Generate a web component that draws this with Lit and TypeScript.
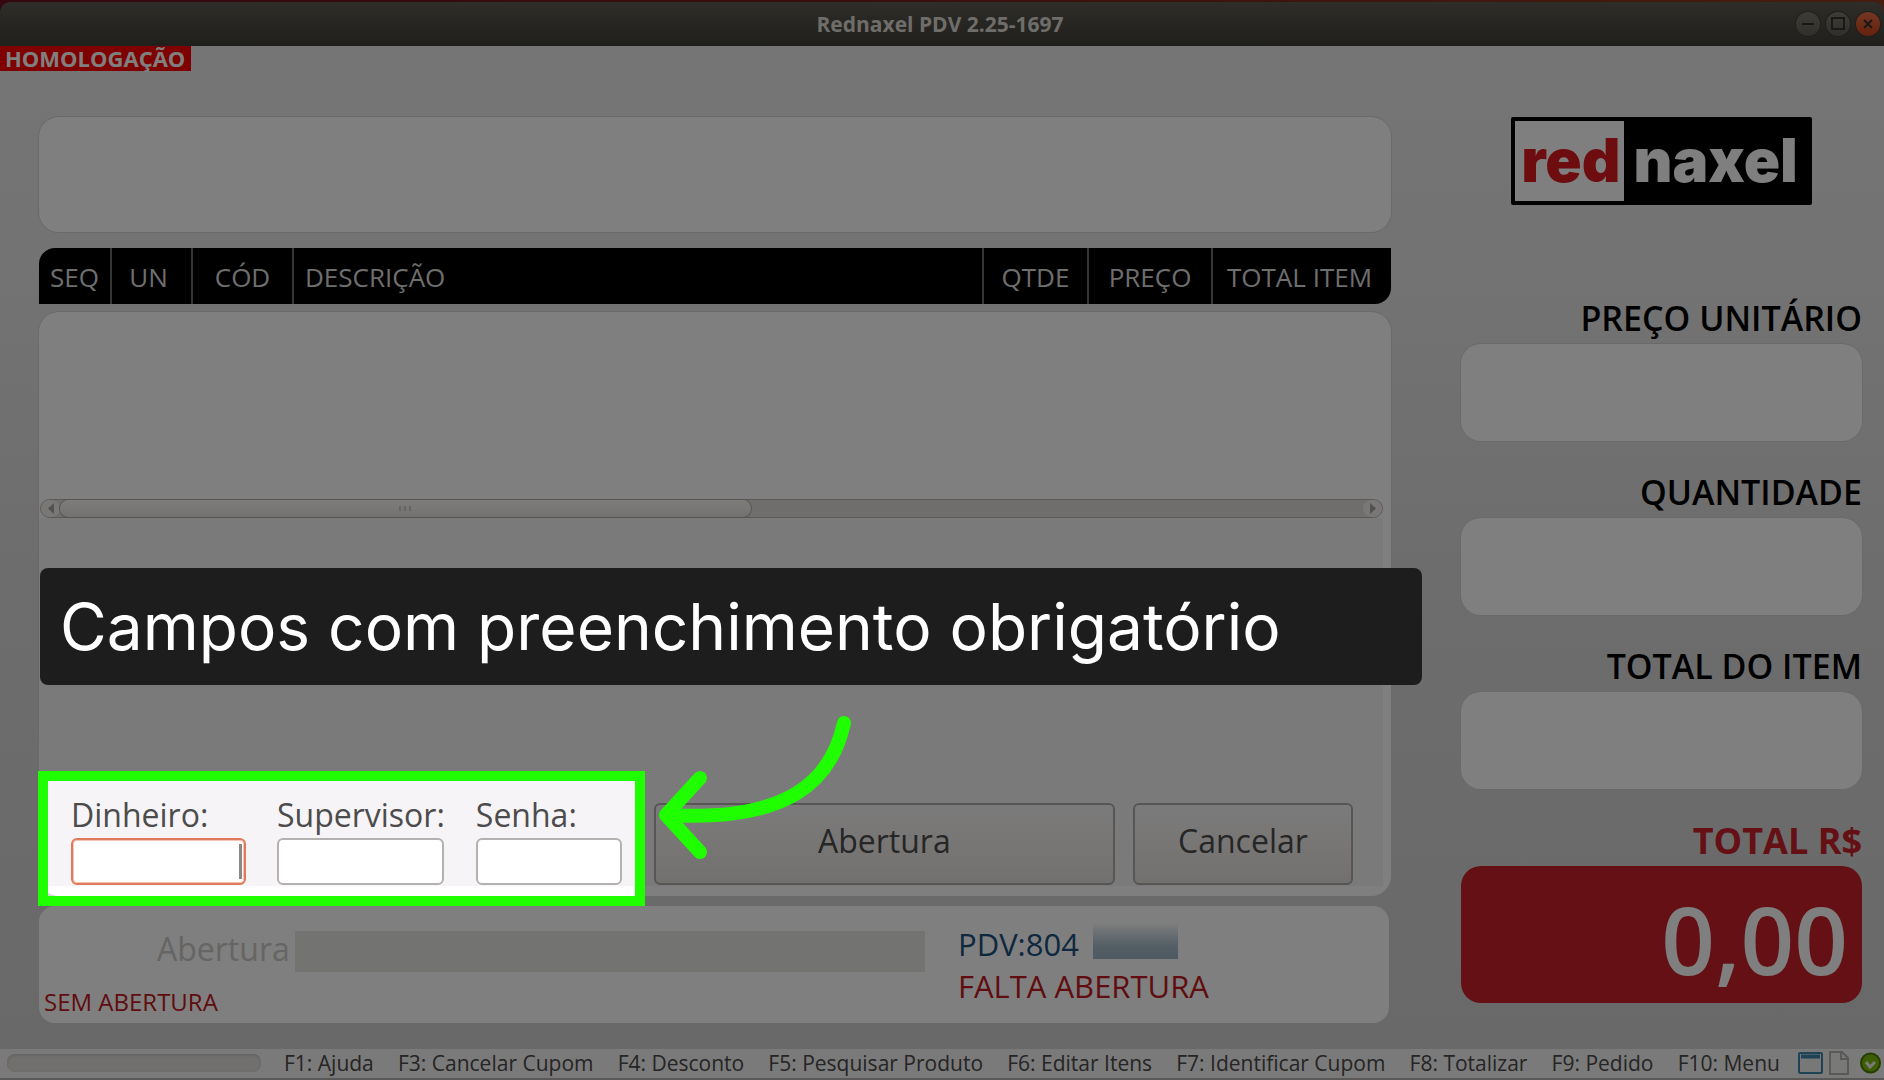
import { LitElement, html, css } from "lit";
import { customElement } from "lit/decorators.js";

interface Column {
  label: string;
  cls: string;
}

const COLUMNS: Column[] = [
  { label: "SEQ", cls: "c-seq" },
  { label: "UN", cls: "c-un" },
  { label: "CÓD", cls: "c-cod" },
  { label: "DESCRIÇÃO", cls: "c-desc" },
  { label: "QTDE", cls: "c-qtde" },
  { label: "PREÇO", cls: "c-preco" },
  { label: "TOTAL ITEM", cls: "c-total" },
];

const SHORTCUTS = [
  "F1: Ajuda",
  "F3: Cancelar Cupom",
  "F4: Desconto",
  "F5: Pesquisar Produto",
  "F6: Editar Itens",
  "F7: Identificar Cupom",
  "F8: Totalizar",
  "F9: Pedido",
  "F10: Menu",
];

const FIELDS = [
  { id: "dinheiro", label: "Dinheiro:", type: "text" },
  { id: "supervisor", label: "Supervisor:", type: "text" },
  { id: "senha", label: "Senha:", type: "password" },
];

const AMOUNTS = ["PREÇO UNITÁRIO", "QUANTIDADE", "TOTAL DO ITEM"];

@customElement("pdv-titlebar")
export class PdvTitlebar extends LitElement {
  static styles = css`
    :host {
      display: block;
      background: linear-gradient(90deg, #6a1020, #6e1c1c 40%, #8a3c20);
      padding-top: 2px;
    }
    .bar {
      display: grid;
      grid-template-columns: 1fr auto 1fr;
      align-items: center;
      height: 44px;
      padding-right: 4px;
      border-radius: 10px 10px 0 0;
      background: linear-gradient(#5e5b52, #504e46 40%, #403f39);
    }
    .title {
      grid-column: 2;
      margin: 0;
      font: 700 21px/28px "Open Sans", "Noto Sans", sans-serif;
      color: #dfdbd2;
    }
    .controls {
      display: flex;
      justify-content: flex-end;
      gap: 6px;
    }
    .control {
      width: 24px;
      height: 24px;
      padding: 0;
      border: 0;
      border-radius: 50%;
      background: linear-gradient(#7c796e, #605e56);
      box-shadow: 0 0 0 1px #3c3b37;
    }
    .close {
      background: linear-gradient(#e86e48, #cc4418);
    }
    .glyph {
      display: block;
      fill: none;
      stroke: #34332e;
      stroke-width: 2;
    }
  `;

  render() {
    return html`
      <header class="bar">
        <h1 class="title">Rednaxel PDV 2.25-1697</h1>
        <div class="controls">
          <button class="control" aria-label="Minimizar">
            <svg class="glyph" viewBox="0 0 24 24"><path d="M6 12h12" /></svg>
          </button>
          <button class="control" aria-label="Maximizar">
            <svg class="glyph" viewBox="0 0 24 24"><path d="M6 6h12v11H6z" /></svg>
          </button>
          <button class="control close" aria-label="Fechar">
            <svg class="glyph" viewBox="0 0 24 24"><path d="M8 8l8 8M16 8l-8 8" /></svg>
          </button>
        </div>
      </header>
    `;
  }
}

@customElement("pdv-summary")
export class PdvSummary extends LitElement {
  static styles = css`
    :host {
      display: flex;
      flex-direction: column;
      font-family: "Open Sans", "Noto Sans", sans-serif;
    }
    .logo {
      display: flex;
      align-self: center;
      box-sizing: border-box;
      height: 88px;
      margin-bottom: 95px;
      border: 4px solid #000;
      border-radius: 2px;
      background: #000;
      font: 900 60px/78px "Inter", "Liberation Sans", sans-serif;
      color: #fff;
    }
    .red {
      padding: 0 4px 0 6px;
      background: #fff;
      color: #dc1a20;
    }
    .naxel {
      padding: 0 10px 0 9px;
    }
    .group {
      display: flex;
      flex-direction: column;
      margin-bottom: 33px;
    }
    .group:last-child {
      margin-bottom: 0;
    }
    .label {
      padding-bottom: 7px;
      text-align: right;
      font-size: 34px;
      font-weight: 600;
      line-height: 37px;
      color: #000;
      white-space: nowrap;
    }
    .value {
      box-sizing: border-box;
      height: 97px;
      border-radius: 20px;
      background: #fff;
      box-shadow: 0 0 0 1px #d2d4d4;
    }
    .strong {
      color: #c82028;
      font-size: 36px;
      font-weight: 700;
    }
    .grand {
      height: 137px;
      padding-right: 14px;
      background: #c82028;
      box-shadow: none;
      color: #fff;
      text-align: right;
      font-size: 94px;
      font-weight: 600;
      line-height: 146px;
    }
  `;

  render() {
    return html`
      <div class="logo"><span class="red">red</span><span class="naxel">naxel</span></div>
      ${AMOUNTS.map(
        (name, i) => html`
          <div class="group">
            <label class="label" for="amount-${i}">${name}</label>
            <output class="value" id="amount-${i}"></output>
          </div>
        `,
      )}
      <div class="group">
        <label class="label strong" for="grand">TOTAL R$</label>
        <output class="value grand" id="grand">0,00</output>
      </div>
    `;
  }
}

@customElement("pdv-statusbar")
export class PdvStatusbar extends LitElement {
  static styles = css`
    :host {
      display: flex;
      align-items: center;
      box-sizing: border-box;
      height: 31px;
      padding: 0 3px 2px 7px;
      border-bottom: 2px solid #b4b2b0;
      background: #f6f4f4;
      font: 21px/28px "Open Sans", "Noto Sans", sans-serif;
      color: #4a4a4a;
    }
    .progress {
      appearance: none;
      flex: none;
      width: 254px;
      height: 18px;
      margin-right: 23px;
      border: 0;
      border-radius: 8px;
      overflow: hidden;
      background: #e2e0dc;
      box-shadow: inset 0 1px 3px #c2c0bc;
    }
    .progress::-webkit-progress-bar {
      background: transparent;
    }
    .keys {
      display: flex;
      flex: 1;
      justify-content: space-between;
      margin: 0;
      padding: 0;
      list-style: none;
      white-space: nowrap;
    }
    .icons {
      display: flex;
      align-items: center;
      gap: 6px;
      margin-left: 18px;
    }
    .icon {
      display: block;
      flex: none;
    }
    .ok {
      margin-left: 5px;
    }
  `;

  render() {
    return html`
      <progress class="progress" value="0" max="100" aria-label="Progresso"></progress>
      <ul class="keys">
        ${SHORTCUTS.map((s) => html`<li>${s}</li>`)}
      </ul>
      <div class="icons">
        <svg class="icon" width="25" height="22" viewBox="0 0 25 22">
          <rect x="1" y="1" width="23" height="20" rx="1" fill="#f0f0f0" stroke="#3f87ab" stroke-width="2" />
          <path d="M3 4.500h19" stroke="#3f87ab" stroke-width="4" />
        </svg>
        <svg class="icon" width="20" height="24" viewBox="0 0 20 24">
          <path d="M1 1h12l6 6v16H1z" fill="#f2f2f0" stroke="#b4b2ae" stroke-width="2" />
          <path d="M12 2v6h6" fill="none" stroke="#b4b2ae" stroke-width="2" />
        </svg>
        <svg class="icon ok" width="21" height="22" viewBox="0 0 21 22">
          <circle cx="10.500" cy="11" r="9.500" fill="#7cbc08" stroke="#4c7c00" stroke-width="2" />
          <path d="M6 10l4 5 5-5" fill="none" stroke="#f4f4f4" stroke-width="3" />
        </svg>
      </div>
    `;
  }
}

@customElement("app-root")
export class AppRoot extends LitElement {
  static styles = css`
    :host {
      display: flex;
      flex-direction: column;
      position: relative;
      min-height: 100vh;
      overflow: hidden;
      background: linear-gradient(#ececec, #e6e6e6 25%, #dadada 55%, #d2d2d2);
      font-family: "Open Sans", "Noto Sans", sans-serif;
      color: #4c4c4c;
    }
    .env {
      align-self: flex-start;
      padding: 0 6px 0 5px;
      background: #f00;
      color: #fff;
      font-size: 22px;
      font-weight: 700;
      line-height: 25px;
    }
    .workspace {
      display: grid;
      flex: 1;
      grid-template-columns: 1fr 401px;
      column-gap: 70px;
      padding: 46px 22px 26px 39px;
    }
    .sale {
      display: flex;
      flex-direction: column;
      min-width: 0;
    }
    .display {
      height: 115px;
      margin-bottom: 16px;
      border-radius: 20px;
      background: #fff;
      box-shadow: 0 0 0 1px #d2d4d4;
    }
    .items {
      width: 100%;
      margin-bottom: 8px;
      border-spacing: 0;
      table-layout: fixed;
      overflow: hidden;
      border-radius: 16px 0 16px 0;
      background: #000;
      color: #dcdcdc;
    }
    .items th {
      height: 56px;
      padding: 2px 0 0;
      box-sizing: border-box;
      border-right: 2px solid #6a6a6a;
      font-size: 26px;
      font-weight: 400;
      line-height: 36px;
      text-align: center;
      white-space: nowrap;
    }
    .items .c-seq { width: 73px; }
    .items .c-un { width: 81px; padding-right: 6px; }
    .items .c-cod { width: 101px; }
    .items .c-desc { padding-left: 11px; text-align: left; }
    .items .c-qtde { width: 105px; }
    .items .c-preco { width: 124px; }
    .items .c-total { width: 178px; padding-left: 14px; border-right: 0; text-align: left; }
    .panel {
      display: flex;
      position: relative;
      flex: 1;
      flex-direction: column;
      margin-bottom: 10px;
      padding-bottom: 10px;
      border-radius: 20px;
      background: #fff;
      box-shadow: 0 0 0 1px #d2d4d4;
    }
    .list {
      flex: 1;
    }
    .scroll {
      display: flex;
      box-sizing: border-box;
      height: 19px;
      margin: 0 8px 0 1px;
      border: 1px solid #b6b4b0;
      border-radius: 10px;
      background: #dfddd9;
    }
    .arrow {
      width: 19px;
      border-radius: 9px;
      background: #f2f0ee;
    }
    .arrow svg {
      display: block;
      margin: 3px auto;
      fill: #a4a29e;
    }
    .track {
      flex: 1;
    }
    .thumb {
      display: flex;
      align-items: center;
      justify-content: center;
      gap: 3px;
      width: 53%;
      height: 17px;
      border-radius: 9px;
      background: linear-gradient(#fbf9f5, #e6e4e0);
      box-shadow: 0 0 0 1px #aaa8a4;
    }
    .grip {
      width: 2px;
      height: 5px;
      background: #cccac6;
    }
    .form {
      display: flex;
      align-items: flex-end;
      box-sizing: border-box;
      min-height: 368px;
      margin-right: 8px;
      padding: 0 30px 1px 32px;
      background: #f6f4f6;
    }
    .fields {
      display: flex;
      position: relative;
      gap: 31px;
      margin-right: 32px;
    }
    .field {
      display: flex;
      flex-direction: column;
      gap: 3px;
      font-size: 32px;
      line-height: 40px;
    }
    .input {
      box-sizing: border-box;
      width: 167px;
      height: 47px;
      padding: 0 8px;
      border: 2px solid #b4b2b0;
      border-radius: 6px;
      outline: none;
      background: #fff;
      font: inherit;
      font-size: 26px;
    }
    .w-dinheiro {
      width: 175px;
      border-color: #dd7b5a;
      box-shadow: inset 0 0 0 1px #f4c4b2;
    }
    .w-senha {
      width: 146px;
    }
    .money {
      display: flex;
      position: relative;
    }
    .caret {
      position: absolute;
      top: 6px;
      right: 4px;
      width: 3px;
      height: 35px;
      background: #8c8886;
    }
    .spotlight {
      position: absolute;
      z-index: 2;
      inset: -24px -23px -21px -33px;
      border: 10px solid #20ff00;
      box-shadow: 0 0 0 4000px rgba(0, 0, 0, 0.5);
      pointer-events: none;
    }
    .pointer {
      position: absolute;
      z-index: 3;
      top: -84px;
      left: calc(100% + 33px);
      fill: none;
      stroke: #20ff00;
      stroke-width: 14;
      stroke-linecap: round;
      stroke-linejoin: round;
      pointer-events: none;
    }
    .callout {
      position: absolute;
      z-index: 3;
      right: -31px;
      bottom: 211px;
      left: 1px;
      margin: 0;
      padding-left: 20px;
      border-radius: 8px;
      background: rgba(28, 28, 28, 0.98);
      color: #fff;
      font: 400 64px/117px "Inter", "Liberation Sans", sans-serif;
      white-space: nowrap;
    }
    .button {
      flex: 1;
      height: 82px;
      padding: 0 0 7px;
      border: 2px solid #aeaca8;
      border-radius: 6px;
      background: linear-gradient(#f8f6f6, #efedeb 50%, #e4e2de);
      color: inherit;
      font: inherit;
      font-size: 32px;
    }
    .actions {
      display: flex;
      flex: 1;
      gap: 18px;
    }
    .open {
      flex: 463;
    }
    .cancel {
      flex: 219;
    }
    .footer {
      display: grid;
      grid-template-columns: auto 1fr 431px;
      grid-template-rows: 41px 1fr;
      box-sizing: border-box;
      height: 117px;
      margin-right: 2px;
      padding: 25px 0 0 5px;
      border-radius: 16px;
      background: #fff;
    }
    .footer-label {
      padding-left: 113px;
      font-size: 32px;
      line-height: 36px;
      color: #cccac8;
    }
    .footer-input {
      box-sizing: border-box;
      width: auto;
      min-width: 0;
      height: 41px;
      margin: 0 33px 0 5px;
      border: 0;
      background: #e7e6e3;
    }
    .state {
      grid-column: 1 / 3;
      margin: 0;
      padding-top: 13px;
      font-size: 24px;
      line-height: 34px;
      color: #c01820;
      white-space: nowrap;
    }
    .terminal {
      grid-column: 3;
      grid-row: 1 / 3;
      margin-top: -8px;
      font-size: 31px;
      line-height: 42px;
      white-space: nowrap;
    }
    .pdv {
      display: flex;
      margin: 0;
      gap: 14px;
      color: #1c5080;
    }
    .masked {
      width: 85px;
      height: 36px;
      background: linear-gradient(#fdfdfd, #d4dee6 30%, #a8bccb 65%, #9cb2c2);
    }
    .missing {
      margin: 0;
      color: #c01820;
    }
  `;

  render() {
    return html`
      <pdv-titlebar></pdv-titlebar>
      <div class="env">HOMOLOGAÇÃO</div>
      <div class="workspace">
        <main class="sale">
          <div class="display"></div>
          <table class="items">
            <thead>
              <tr>
                ${COLUMNS.map((c) => html`<th class=${c.cls} scope="col">${c.label}</th>`)}
              </tr>
            </thead>
          </table>
          <section class="panel">
            <div class="list"></div>
            <div class="scroll">
              <span class="arrow">
                <svg width="6" height="11" viewBox="0 0 6 11"><path d="M6 0v11L0 5.500z" /></svg>
              </span>
              <div class="track">
                <div class="thumb">
                  <i class="grip"></i><i class="grip"></i><i class="grip"></i>
                </div>
              </div>
              <span class="arrow">
                <svg width="6" height="11" viewBox="0 0 6 11"><path d="M0 0v11l6-5.500z" /></svg>
              </span>
            </div>
            <form class="form" @submit=${(e: Event) => e.preventDefault()}>
              <div class="fields">
                ${FIELDS.map(
                  (f) => html`
                    <div class="field">
                      <label for=${f.id}>${f.label}</label>
                      <div class="money">
                        <input class="input w-${f.id}" id=${f.id} type=${f.type} autocomplete="off" />
                        ${f.id === "dinheiro" ? html`<span class="caret"></span>` : null}
                      </div>
                    </div>
                  `,
                )}
                <div class="spotlight"></div>
                <svg class="pointer" width="204" height="150" viewBox="656 712 204 150">
                  <path d="M845 724C832 783 789 823 667 816M701 779L667 816L701 853" />
                </svg>
              </div>
              <div class="actions">
                <button class="button open" type="submit">Abertura</button>
                <button class="button cancel" type="button">Cancelar</button>
              </div>
            </form>
            <p class="callout">Campos com preenchimento obrigatório</p>
          </section>
          <section class="footer">
            <label class="footer-label" for="abertura">Abertura</label>
            <input class="footer-input" id="abertura" disabled />
            <p class="state">SEM ABERTURA</p>
            <div class="terminal">
              <p class="pdv">PDV:804 <span class="masked"></span></p>
              <p class="missing">FALTA ABERTURA</p>
            </div>
          </section>
        </main>
        <pdv-summary></pdv-summary>
      </div>
      <pdv-statusbar></pdv-statusbar>
    `;
  }
}
